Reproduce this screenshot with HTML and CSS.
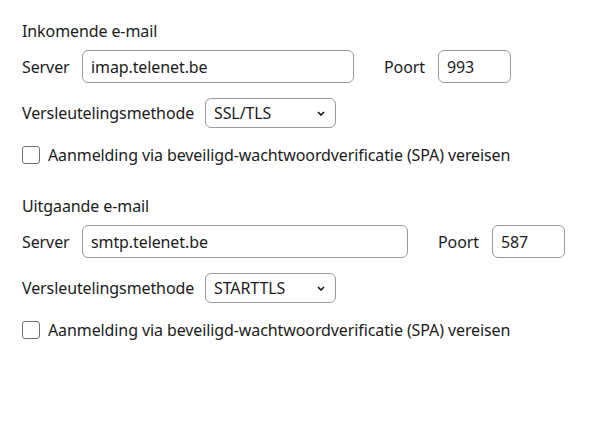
FILE: index.html
```html
<!DOCTYPE html>
<html lang="nl">
<head>
  <meta charset="UTF-8">
  <meta name="viewport" content="width=device-width, initial-scale=1.0">
  <title>Serverinstellingen</title>
  <link rel="stylesheet" href="styles.css">
</head>
<body>
  <form class="settings">
    <!-- Inkomende server -->
    <section class="group">
      <h2 class="group-title">Inkomende e-mail</h2>
      <div class="row row-server">
        <label class="label label-server" for="in-server">Server</label>
        <input class="field field-in" type="text" id="in-server" value="imap.telenet.be">
        <label class="label label-port" for="in-port">Poort</label>
        <input class="field field-port" type="text" id="in-port" value="993">
      </div>
      <div class="row row-select">
        <label class="label label-method" for="in-method">Versleutelingsmethode</label>
        <select class="dropdown" id="in-method">
          <option selected>SSL/TLS</option>
          <option>STARTTLS</option>
        </select>
      </div>
      <label class="check">
        <input type="checkbox">
        <span class="box"></span>
        <span>Aanmelding via beveiligd-wachtwoordverificatie (SPA) vereisen</span>
      </label>
    </section>

    <!-- Uitgaande server -->
    <section class="group">
      <h2 class="group-title">Uitgaande e-mail</h2>
      <div class="row row-server">
        <label class="label label-server" for="out-server">Server</label>
        <input class="field field-out" type="text" id="out-server" value="smtp.telenet.be">
        <label class="label label-port" for="out-port">Poort</label>
        <input class="field field-port" type="text" id="out-port" value="587">
      </div>
      <div class="row row-select">
        <label class="label label-method" for="out-method">Versleutelingsmethode</label>
        <select class="dropdown" id="out-method">
          <option>SSL/TLS</option>
          <option selected>STARTTLS</option>
        </select>
      </div>
      <label class="check">
        <input type="checkbox">
        <span class="box"></span>
        <span>Aanmelding via beveiligd-wachtwoordverificatie (SPA) vereisen</span>
      </label>
    </section>
  </form>
</body>
</html>
```

FILE: styles.css
```css
body {
  margin: 0;
  padding: 20px 22px;
  background: #ffffff;
  color: #1b1b1b;
  font-family: "Noto Sans", "Open Sans", sans-serif;
  font-size: 16px;
  letter-spacing: -0.1px;
}

.settings {
  display: flex;
  flex-direction: column;
  gap: 29px;
}

.group {
  display: flex;
  flex-direction: column;
}

.group-title {
  margin: 0 0 8px;
  font-size: 16px;
  font-weight: normal;
  line-height: 22px;
}

.row {
  display: flex;
  align-items: center;
}

.row-server {
  height: 33px;
  margin-bottom: 15px;
}

.row-select {
  height: 30px;
  margin-bottom: 16px;
}

.label {
  flex: none;
  line-height: 22px;
}

.label-server {
  width: 60px;
}

.label-port {
  width: 54px;
  margin-left: 30px;
}

.label-method {
  width: 183px;
}

.field {
  box-sizing: border-box;
  height: 33px;
  padding: 0 8px;
  border: 1px solid #9a9a9a;
  border-radius: 6px;
  font: inherit;
  letter-spacing: inherit;
  color: #1b1b1b;
  background: #fff;
  outline: none;
}

.field-in {
  width: 272px;
}

.field-out {
  width: 326px;
}

.field-port {
  width: 73px;
}

.dropdown {
  box-sizing: border-box;
  width: 131px;
  height: 30px;
  padding: 0 24px 0 8px;
  border: 1px solid #9a9a9a;
  border-radius: 6px;
  font: inherit;
  letter-spacing: inherit;
  color: #1b1b1b;
  appearance: none;
  background: #fff url("data:image/svg+xml,%3Csvg xmlns='http://www.w3.org/2000/svg' width='8' height='5' viewBox='0 0 8 5'%3E%3Cpath d='M1 1l3 3 3-3' fill='none' stroke='%23111' stroke-width='1.6'/%3E%3C/svg%3E") no-repeat right 10px center;
}

.check {
  display: flex;
  align-items: center;
  height: 22px;
  cursor: pointer;
}

.check input {
  display: none;
}

.check .box {
  box-sizing: border-box;
  width: 18px;
  height: 18px;
  margin-right: 8px;
  border: 1px solid #707070;
  border-radius: 3px;
  background: #fff;
}

.check input:checked + .box {
  background: #0067c0;
  border-color: #0067c0;
}
```
